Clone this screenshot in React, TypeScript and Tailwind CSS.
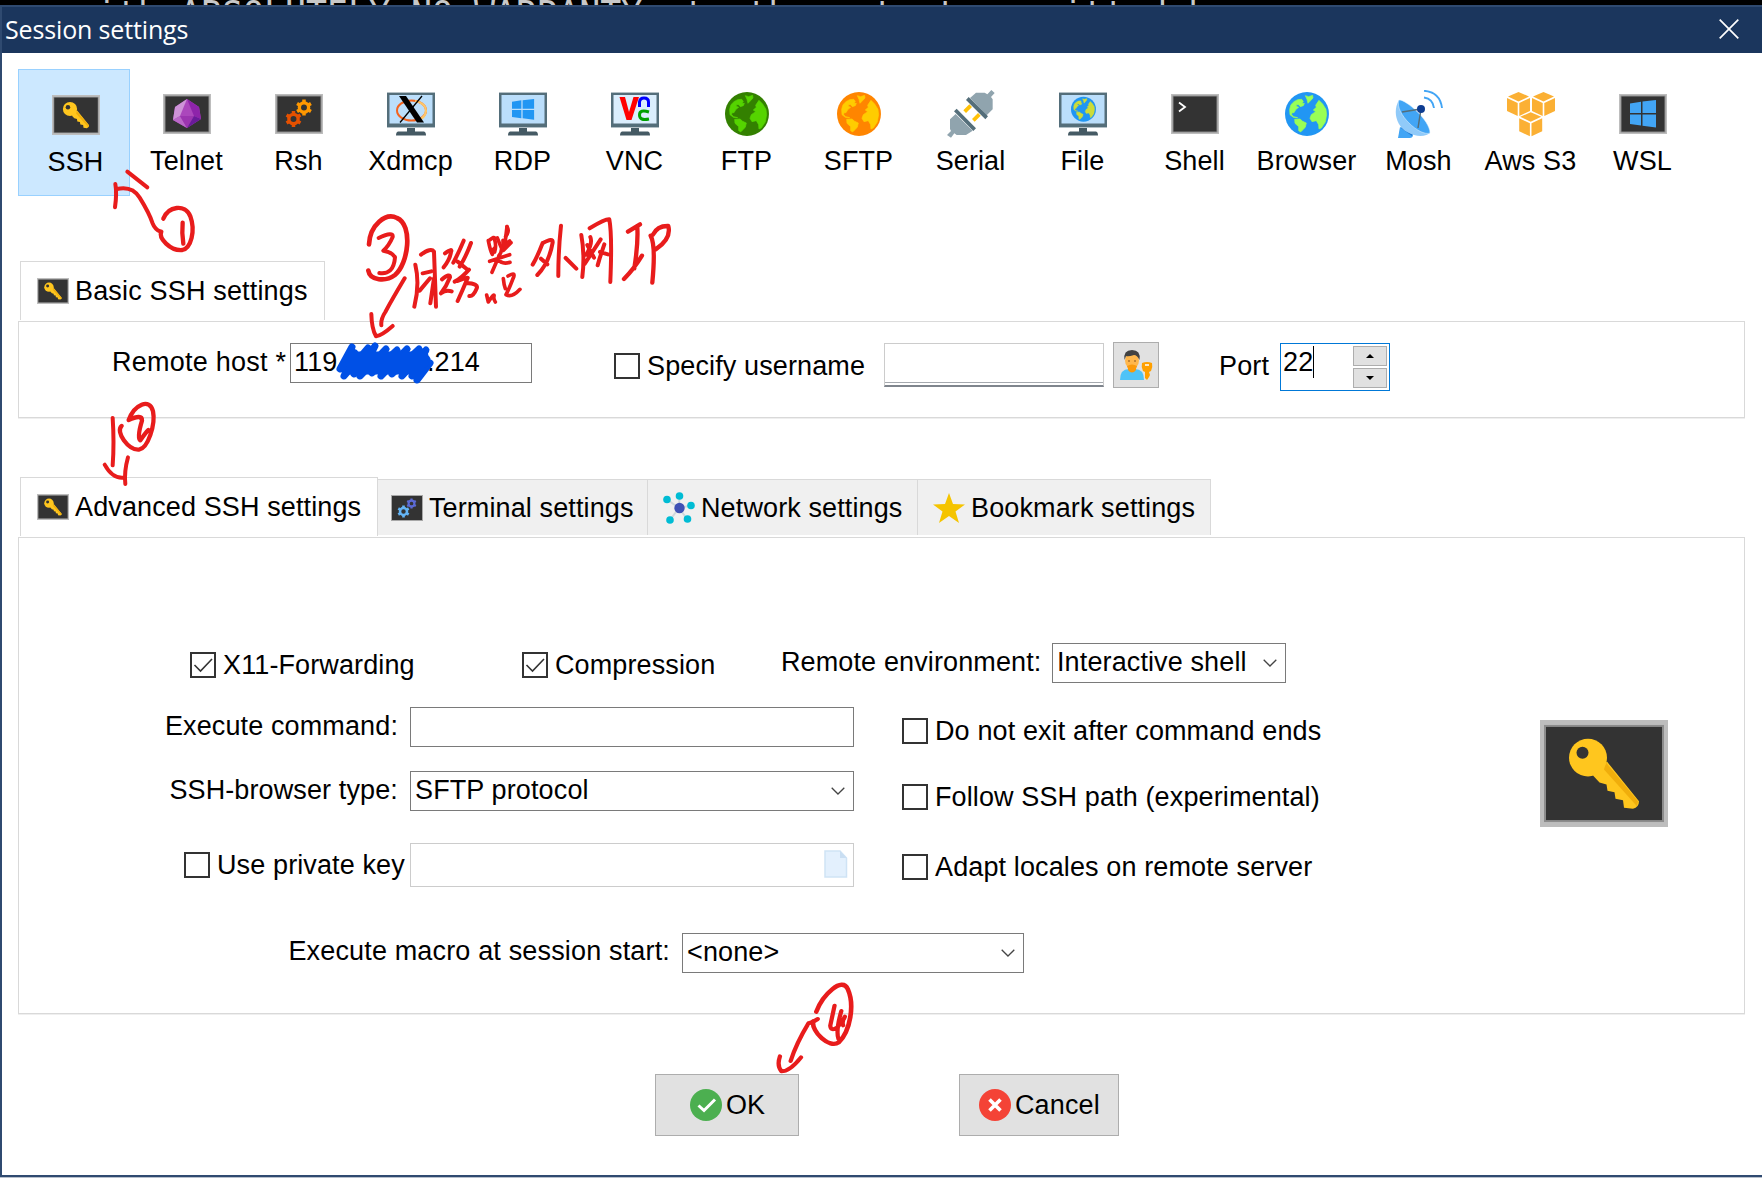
import type { ReactNode } from "react";

function TerminalFrame({ children }: { children?: ReactNode }) {
  return (
    <svg className="h-12 w-12" viewBox="0 0 48 48">
      <rect x="0" y="4" width="48" height="40" fill="#bdbdbd" />
      <rect x="1.5" y="5.5" width="45" height="37" fill="#8c8c8c" />
      <rect x="2.5" y="6.5" width="43" height="35" fill="#333333" />
      {children}
    </svg>
  );
}

function KeyIcon({ className }: { className: string }) {
  return (
    <svg className={className} viewBox="0 0 128 108" preserveAspectRatio="none">
      <rect width="128" height="108" fill="#bdbdbd" />
      <rect x="4" y="5" width="120" height="98" fill="#8c8c8c" />
      <rect x="6" y="7" width="116" height="94" fill="#333333" />
      <path d="M67 42 L99 82 Q99 88 93 89.500 L84 88.500 L83 81 L75.500 79.500 L74.500 73 L67.500 71.500 L66.500 65 L59.500 63 L53 56Z" fill="#ffc61e" />
      <path d="M66 43 L98 82 L97 87 L64 50Z" fill="#f0ae0c" />
      <circle cx="48" cy="38" r="19" fill="#ffc61e" />
      <circle cx="42.500" cy="33" r="6" fill="#333333" />
    </svg>
  );
}

function Gear({ cx, cy, r, color }: { cx: number; cy: number; r: number; color: string }) {
  return (
    <g stroke={color} fill="none">
      <circle cx={cx} cy={cy} r={r * 0.58} strokeWidth={r * 0.42} />
      {[0, 60, 120, 180, 240, 300].map((a) => (
        <path key={a} d={`M${cx} ${cy - r * 0.65} V${cy - r}`} strokeWidth={r * 0.44} transform={`rotate(${a} ${cx} ${cy})`} />
      ))}
    </g>
  );
}

function Monitor({ screen = "#bbdefb", children }: { screen?: string; children?: ReactNode }) {
  return (
    <svg className="h-12 w-12" viewBox="0 0 48 48">
      <rect x="0" y="2" width="48" height="36" fill="#b4c0c6" />
      <rect x="0" y="3" width="48" height="34" fill="#546e7a" />
      <rect x="2.500" y="5" width="43" height="28.500" fill={screen} />
      <rect x="20" y="38" width="8" height="4" fill="#455a64" />
      <path d="M11 41.500 H37 Q39 42 39 45.500 H9 Q9 42 11 41.500Z" fill="#455a64" />
      {children}
    </svg>
  );
}

function GlobeShape({ sea, land }: { sea: string; land: string }) {
  return (
    <g>
      <circle cx="171" cy="102" r="66" fill={sea} />
      <g fill={land} stroke={land} strokeWidth="2" strokeLinejoin="round">
        <path d="M119 88 L123 74 L132 65 L143 59 L155 58 L160 64 L156 70 L163 70 L160 77 L151 80 L146 74 L139 74 L139 79 L146 82 L138 88 L132 98 L126 98 L125 104 L131 110 L143 113 L130 112 L120 104Z" />
        <path d="M134 118 L150 117 L158 124 L169 129 L166 142 L157 151 L152 156 L146 152 L146 140 L135 130Z" />
        <path d="M166 47 L176 50 L188 46 L189 54 L180 64 L174 70 L171 58Z" />
        <path d="M207 61 L218 72 L228 88 L230 104 L226 126 L214 144 L207 147 L206 134 L199 122 L186 125 L180 115 L184 104 L197 95 L190 90 L199 82 L197 76Z" />
      </g>
    </g>
  );
}

function Globe({ sea, land }: { sea: string; land: string }) {
  return (
    <svg className="h-12 w-12" viewBox="0 0 48 48">
      <g transform="translate(2 2) scale(.333) translate(-105 -36)">
        <GlobeShape sea={sea} land={land} />
      </g>
    </svg>
  );
}

function WindowsMark({ color, transform }: { color: string; transform?: string }) {
  return (
    <g fill={color} transform={transform}>
      <path d="M0 3.500 L11 1.800 V13 H0Z" />
      <path d="M12.500 1.600 L26 0 V13 H12.500Z" />
      <path d="M0 14.500 H11 V25.500 L0 24Z" />
      <path d="M12.500 14.500 H26 V27.500 L12.500 25.800Z" />
    </g>
  );
}

function Cube({ x, y }: { x: number; y: number }) {
  return (
    <g transform={`translate(${x} ${y})`} fill="#fbb034">
      <path d="M11.500 0 L22 4.500 L11.500 9.500 L1 4.500Z" />
      <path d="M0 6 L10.700 11 V24 L0 19Z" />
      <path d="M23 6 L12.300 11 V24 L23 19Z" />
    </g>
  );
}

function SerialIcon() {
  return (
    <svg className="h-12 w-12" viewBox="0 0 144 144">
      <g transform="translate(-771 -30)">
        <path d="M771 165 L783 153 L780 147 V118 L797 102 L848 152 L828 165 H800 L793 160 L783 173Z" fill="#90a4ae" />
        <path d="M914 39 L903 51 L908 58 V88 L890 106 L840 54 L858 38 H884 L892 43 L904 30Z" fill="#90a4ae" />
        <path d="M792 94 L800 86 L858 145 L850 153Z M828 60 L836 51 L894 109 L886 118Z" fill="#546e7a" />
        <path d="M820 91 L838 73 L846 81 L828 99Z M846 117 L864 99 L872 107 L854 125Z" fill="#ffc107" />
      </g>
    </svg>
  );
}

function MoshIcon() {
  return (
    <svg className="h-12 w-12" viewBox="0 0 48 48">
      <path d="M5 37 L17 42 L18 46 Q17 48 15 48 H3Z" fill="#42a5f5" />
      <path d="M6 38 L17 46 L18 43 L8 36Z" fill="#1976d2" />
      <path d="M4 10 C-3 22 2 36 12 42 C22 48 32 46 35 43Z" fill="#90caf9" />
      <path d="M4 10 C10 9 35 30 35 43 C25 47 -1 23 4 10Z" fill="#42a5f5" stroke="#e3f2fd" strokeWidth=".5" />
      <path d="M7 22 L26 19 L23 38" fill="none" stroke="#546e7a" strokeWidth="1.500" />
      <circle cx="26" cy="19" r="4" fill="#0d3c91" />
      <path d="M29 7.500 Q38 9 39 18 M29 .800 Q45 2 47 18" fill="none" stroke="#42a5f5" strokeWidth="1.900" />
    </svg>
  );
}

type Session = { name: string; icon: ReactNode };

const sessions: Session[] = [
  {
    name: "Telnet",
    icon: (
      <TerminalFrame>
        <path d="M24 9 L36 17 L38 29 L24 38 L10 30 L12 17Z" fill="#ab47bc" />
        <path d="M24 9 L17 26 L10 30 L12 17Z" fill="#ce93d8" />
        <path d="M24 9 L31 26 L38 29 L36 17Z" fill="#8e24aa" />
        <path d="M17 26 L24 38 L10 30Z" fill="#ba68c8" />
        <path d="M17 26 H31 L24 38Z" fill="#9c35b0" />
        <path d="M31 26 L38 29 L24 38Z" fill="#6a1b9a" />
      </TerminalFrame>
    ),
  },
  {
    name: "Rsh",
    icon: (
      <TerminalFrame>
        <Gear cx={29} cy={17.5} r={8} color="#ff9800" />
        <Gear cx={18.500} cy={29} r={8} color="#e65100" />
      </TerminalFrame>
    ),
  },
  {
    name: "Xdmcp",
    icon: (
      <Monitor>
        <ellipse cx="24.500" cy="20.500" rx="14.500" ry="10" fill="none" stroke="#f4631e" strokeWidth="2" />
        <path d="M28 11 Q39 13 39 21 Q38 28 31 30" fill="none" stroke="#fdc66b" strokeWidth="2.200" />
        <path d="M12 6 H19 L37 32.500 H30Z" fill="#000" />
        <path d="M35 6 L13 32.500" stroke="#000" strokeWidth="1.300" />
      </Monitor>
    ),
  },
  {
    name: "RDP",
    icon: (
      <Monitor>
        <WindowsMark color="#2196f3" transform="translate(13 9) scale(.85 .75)" />
      </Monitor>
    ),
  },
  {
    name: "VNC",
    icon: (
      <Monitor screen="#dbeefd">
        <path d="M8.500 7 H14 L18 22 L22.500 7 H28 L20.500 30 H15.500Z" fill="#f00" />
        <path d="M28.500 17 V12 Q29 8 33 8 Q37.500 8 37.500 12 V17" fill="none" stroke="#00f" strokeWidth="3" />
        <path d="M38 22 Q28.500 19 28.500 25 Q28.500 31 38 29" fill="none" stroke="#00a000" strokeWidth="3" />
      </Monitor>
    ),
  },
  { name: "FTP", icon: <Globe sea="#338000" land="#55d400" /> },
  { name: "SFTP", icon: <Globe sea="#ff8500" land="#ffcc00" /> },
  { name: "Serial", icon: <SerialIcon /> },
  {
    name: "File",
    icon: (
      <Monitor>
        <g transform="translate(12 6.700) scale(.189) translate(-105 -36)">
          <GlobeShape sea="#2196f3" land="#cddc39" />
        </g>
      </Monitor>
    ),
  },
  {
    name: "Shell",
    icon: (
      <TerminalFrame>
        <path d="M8 12.500 L14 17 L8 21.500" fill="none" stroke="#fff" strokeWidth="1.800" />
      </TerminalFrame>
    ),
  },
  { name: "Browser", icon: <Globe sea="#2196f3" land="#99ff55" /> },
  { name: "Mosh", icon: <MoshIcon /> },
  {
    name: "Aws S3",
    icon: (
      <svg className="h-12 w-12" viewBox="0 0 48 48">
        <Cube x={0} y={2} />
        <Cube x={25} y={2} />
        <Cube x={12.200} y={22.300} />
      </svg>
    ),
  },
  {
    name: "WSL",
    icon: (
      <TerminalFrame>
        <WindowsMark color="#42a5f5" transform="translate(11 10)" />
      </TerminalFrame>
    ),
  },
];

function Checkbox({ label, checked = false }: { label: string; checked?: boolean }) {
  return (
    <div className="flex h-[30px] items-center gap-[7px]">
      <span className="flex h-[26px] w-[26px] shrink-0 border-2 border-[#333] bg-white">
        {checked && (
          <svg viewBox="0 0 22 22" className="h-[22px] w-[22px]">
            <path d="M2.500 11 L8.500 17 L20 5" fill="none" stroke="#333" strokeWidth="1.600" />
          </svg>
        )}
      </span>
      <span>{label}</span>
    </div>
  );
}

function Chevron() {
  return (
    <svg viewBox="0 0 14 8" className="h-2 w-3.5 shrink-0">
      <path d="M.7 .7 L7 7 L13.300 .7" fill="none" stroke="#444" strokeWidth="1.300" />
    </svg>
  );
}

function Select({ value, width }: { value: string; width: string }) {
  return (
    <div className={`flex h-10 items-start justify-between border border-[#7a7a7a] bg-white pl-1 pr-2 pt-[3px] ${width}`}>
      <span>{value}</span>
      <span className="flex h-8 items-center">
        <Chevron />
      </span>
    </div>
  );
}

function PlainTab({ label, icon, width, textClass }: { label: string; icon: ReactNode; width: string; textClass: string }) {
  return (
    <div className={`mt-0.5 flex h-14 items-center border-r border-t border-[#d9d9d9] bg-[#f0f0f0] ${width}`}>
      {icon}
      <span className={textClass}>{label}</span>
    </div>
  );
}

function SpinButton({ up }: { up: boolean }) {
  return (
    <div className="flex h-5 w-[34px] items-center justify-center border border-[#adadad] bg-[#e1e1e1]">
      <svg viewBox="0 0 8 4" className="h-1 w-2">
        <path d={up ? "M0 4 L4 0 L8 4Z" : "M0 0 H8 L4 4Z"} fill="#000" />
      </svg>
    </div>
  );
}

/* Freehand pen marks laid over the dialog. */
function Ink() {
  return (
    <svg className="pointer-events-none absolute left-0 top-0 h-[1178px] w-[1762px]" viewBox="0 0 1762 1178" fill="none" strokeLinecap="round" strokeLinejoin="round">
      <g stroke="#e81c1c" strokeWidth="12">
        <g transform="translate(95 165) scale(.3333)">
          <path d="M60 127 Q66 85 61 57 M66 72 Q112 62 134 98 Q163 145 172 173 Q180 193 195 199 M97 20 L157 67" />
          <path d="M205 161 C220 124 270 115 286 154 C302 198 288 249 262 255 C225 258 190 219 199 200 M263 173 Q260 205 265 236" strokeWidth="13" />
          <path d="M53 759 Q58 835 53 901 M29 899 Q52 941 85 938 M99 877 Q87 920 91 957" />
          <path d="M101 765 C118 719 164 697 174 739 C182 778 159 850 132 854 C100 857 60 800 80 783 M101 765 Q142 746 141 767 Q125 820 136 826 Q151 804 160 795" strokeWidth="13" />
        </g>
        <g transform="translate(360 210) scale(.3333)">
          <path d="M27 103 C30 45 77 7 111 24 C160 45 145 162 105 195 C77 216 30 212 25 182" strokeWidth="14" />
          <path d="M56 84 Q101 63 98 81 Q87 107 70 122 Q96 126 105 142 Q101 195 58 189 M134 205 Q97 267 76 306 Q62 327 64 346 M34 312 Q35 356 48 379 Q65 377 98 348" />
          <path d="M166 164 Q180 222 163 290 M183 134 Q213 112 222 125 Q225 210 228 290 M188 190 L214 184 M179 242 L210 205 M211 280 L222 205" />
          <path d="M255 130 Q279 113 273 126 Q270 148 251 172 M311 92 Q294 132 280 158 M333 99 Q318 140 299 170 M293 155 L321 178 M246 208 Q271 188 270 202 Q259 230 243 250 Q257 238 275 244 M327 179 Q303 206 284 215 M293 213 Q326 200 323 204 Q308 240 293 273 M317 219 Q359 220 349 238 Q340 260 328 258" />
          <path d="M385 92 Q391 123 397 133 M389 90 Q405 78 403 85 Q410 107 404 126 M394 125 L406 112 M441 50 Q450 64 437 79 M429 91 L430 121 M430 105 L449 93 M430 121 L453 98 M389 154 L449 134 M418 136 L396 187 M412 147 Q426 165 450 157 M380 255 L385 276 Q405 246 402 259 Q400 268 406 276 M430 206 Q432 226 436 236 M444 198 Q470 183 459 206 Q447 238 438 254 Q455 265 480 238" strokeWidth="11" />
          <path d="M412 84 L425 116 Q424 128 418 136 M441 50 L436 92" strokeWidth="11" />
          <path d="M548 99 Q530 145 518 164 M549 99 Q580 81 578 98 Q567 160 532 195 M543 146 L562 163 M603 47 Q595 120 595 198 M617 144 L649 176" />
          <path d="M664 75 Q675 135 667 201 M689 55 Q735 27 748 28 Q757 75 751 216 M691 81 Q699 99 679 134 M682 105 L702 143 M722 88 L674 162 M733 103 L719 145 L713 166 M720 126 L744 133" />
          <path d="M804 65 L840 43 M832 52 Q835 100 823 175 M846 137 Q821 178 792 207 M872 77 Q888 106 877 218 M879 74 Q892 47 925 48 Q935 86 887 118" strokeWidth="13" />
        </g>
        <g transform="translate(600 960) scale(.357 .3333)">
          <path d="M606 155 C624 103 679 49 694 87 C714 135 701 213 669 247 C642 267 592 215 597 184" strokeWidth="13" />
          <path d="M610 177 Q594 188 584 190 Q550 250 534 303 M504 289 Q495 317 508 334 Q532 334 563 292 M657 137 L645 197 Q647 215 665 202 L684 175 M676 153 Q660 212 668 237 M686 170 Q677 183 681 196" />
        </g>
      </g>
      <g stroke="#0050e6" strokeWidth="7">
        <path d="M352 347 L340 369 L355 353 L344 376 L368 348 L354 374 L375 346 L360 376 L386 349 L372 373 L397 350 L381 376 L407 349 L392 374 L419 349 L402 376 L426 350 L412 376 L427 359 L417 380 L430 363" />
        <path d="M350 363 H424 M352 356 H424 M350 370 H422" strokeWidth="9" />
      </g>
    </svg>
  );
}

export default function App() {
  return (
    <div className="relative flex h-[1178px] w-[1762px] flex-col overflow-hidden bg-white font-['Liberation_Sans',Arial,sans-serif] text-[27px] leading-[30px] tracking-[0.12px] text-black">
      <div className="h-[5px] shrink-0 overflow-hidden whitespace-pre bg-black pl-[75px] font-['DejaVu_Sans_Mono',monospace] text-[34.900px] leading-[28px] tracking-normal text-[#c8c8c8]">
        with ABSOLUTELY NO WARRANTY, to the extent permitted by
      </div>

      <div className="flex h-[1172px] shrink-0 flex-col border-b-2 border-l-2 border-t-2 border-[#2f4a70] bg-white">
        <header className="flex h-[46px] shrink-0 items-center justify-between bg-[#1b365d] pl-[3px] pr-[23px] text-white">
          <h1 className="pb-[3px] font-['Open_Sans','Noto_Sans',sans-serif] text-[25px] tracking-[-0.15px]">Session settings</h1>
          <svg viewBox="0 0 20 20" className="mb-0.5 h-5 w-5">
            <path d="M.7 .7 L19.300 19.300 M19.300 .7 L.7 19.300" stroke="#fff" strokeWidth="1.700" />
          </svg>
        </header>

        <nav className="ml-4 mt-4 flex h-[127px] shrink-0">
          <div className="flex w-28 flex-col items-center gap-2 border border-[#99d1ff] bg-[#cce8ff] pl-[3px] pt-[21px]">
            <div className="flex h-12 w-12 items-center">
              <KeyIcon className="h-10 w-12" />
            </div>
            <span>SSH</span>
          </div>
          {sessions.map((s) => (
            <div key={s.name} className="flex w-28 flex-col items-center gap-2 whitespace-nowrap pl-px pt-[21px]">
              {s.icon}
              <span>{s.name}</span>
            </div>
          ))}
        </nav>

        <div className="ml-[18px] mt-[65px] flex h-[60px] shrink-0">
          <div className="flex h-[59px] w-[305px] items-center gap-1.5 border-x border-t border-[#d9d9d9] pb-px pl-4">
            <KeyIcon className="h-[26px] w-8" />
            <span className="tracking-[0.17px]">Basic SSH settings</span>
          </div>
        </div>
        <section className="ml-4 flex h-[97px] w-[1727px] shrink-0 items-start border border-[#d9d9d9] shadow-[0_1px_0_#efefef]">
          <span className="ml-[93px] mt-[25px] w-[178px] whitespace-nowrap tracking-[0.25px]">Remote host *</span>
          <div className="mt-[21px] flex h-10 w-[242px] items-start justify-between border border-[#7a7a7a] pl-[3px] pr-[51px] pt-[3px]">
            <span>119.</span>
            <span>.214</span>
          </div>
          <div className="ml-[82px] mt-[29px] w-[270px] whitespace-nowrap">
            <Checkbox label="Specify username" />
          </div>
          <div className="mt-[21px] flex h-11 w-[220px] items-end border border-b-2 border-[#ccc] border-b-[#7f858d] pb-0.5">
            <div className="h-px w-full bg-[#a5a9ae]" />
          </div>
          <div className="ml-[9px] mt-5 flex h-[46px] w-[46px] items-center justify-center border border-[#adadad] bg-[#e1e1e1]">
            <svg viewBox="0 0 34 32" className="h-8 w-[34px]">
              <path d="M1 31 Q1 20 10 20 H16 Q25 20 25 31Z" fill="#4fc3f7" />
              <path d="M9 17 H17 V21 Q13 26 9 21Z" fill="#ff9800" />
              <ellipse cx="13" cy="11.500" rx="7" ry="8" fill="#ffb74d" />
              <path d="M8 17 Q13 14 18 17 Q17 22 13 22 Q9 22 8 17Z" fill="#fb9a0c" />
              <path d="M5.500 11 Q4 1 13 1 Q22 1 20.500 11 Q18 6 15 6 Q9 8 7 7Z" fill="#424242" />
              <circle cx="10" cy="12" r=".8" fill="#784719" />
              <circle cx="16" cy="12" r=".8" fill="#784719" />
              <path d="M23 14 Q28 12 33 14 Q34 18 32 22 L30 23 L31 26 L30 28 L28 31 L26 29 V23 L24 22 Q22 18 23 14Z" fill="#ffa000" />
              <path d="M26 16 H30" stroke="#fff" strokeWidth="1.500" />
            </svg>
          </div>
          <span className="ml-[60px] mt-[29px] w-[61px]">Port</span>
          <div className="mt-[21px] flex h-12 w-[110px] items-start border border-[#0078d7] pl-0.5">
            <span className="mt-[3px] w-[30px]">22</span>
            <span className="mt-[2px] h-8 w-px bg-black" />
            <div className="ml-auto mr-0.5 mt-0.5 flex flex-col gap-0.5">
              <SpinButton up />
              <SpinButton up={false} />
            </div>
          </div>
        </section>

        <div className="ml-[18px] mt-[59px] flex h-[60px] shrink-0 items-start whitespace-nowrap">
          <div className="flex h-[59px] w-[358px] items-center gap-1.5 border-x border-t border-[#d9d9d9] pb-px pl-4">
            <KeyIcon className="h-[26px] w-8" />
            <span>Advanced SSH settings</span>
          </div>
          <PlainTab
            label="Terminal settings"
            width="w-[270px] pl-[13px]"
            textClass="pl-1.5"
            icon={
              <svg viewBox="0 0 32 26" className="h-[26px] w-8 shrink-0">
                <rect width="32" height="26" fill="#a8a8a8" />
                <rect x="1" y="1" width="30" height="24" fill="#333" />
                <Gear cx={20.500} cy={8.500} r={5} color="#5c6bd6" />
                <Gear cx={12.500} cy={16.500} r={6} color="#64b5f6" />
              </svg>
            }
          />
          <PlainTab
            label="Network settings"
            width="w-[270px] pl-[15px]"
            textClass="pl-[6px]"
            icon={
              <svg viewBox="0 0 32 32" className="h-8 w-8 shrink-0">
                <path d="M16 16 L4 7.500 M16 16 L16.500 4 M16 16 L28 13.500 M16 16 L24 27 M16 16 L7 28" stroke="#cfd8dc" strokeWidth="2" />
                <circle cx="16.500" cy="16" r="5.200" fill="#3f51b5" />
                <g fill="#00bcd4">
                  <circle cx="4" cy="7.500" r="3.800" />
                  <circle cx="16.500" cy="4" r="3.800" />
                  <circle cx="28" cy="13.500" r="3.800" />
                  <circle cx="24.500" cy="27" r="3.800" />
                  <circle cx="7" cy="28" r="3.800" />
                </g>
              </svg>
            }
          />
          <PlainTab
            label="Bookmark settings"
            width="w-[293px] pl-[15px]"
            textClass="pl-[6px]"
            icon={
              <svg viewBox="0 0 32 32" className="h-8 w-8 shrink-0">
                <path d="M16 1 L20 12 L32 12.500 L22.500 19.500 L26 31 L16 24 L6 31 L9.500 19.500 L0 12.500 L12 12Z" fill="#f5c400" />
              </svg>
            }
          />
        </div>

        <section className="ml-4 flex h-[477px] w-[1727px] shrink-0 flex-col whitespace-nowrap border border-[#d9d9d9] pt-[105px] shadow-[0_1px_0_#efefef]">
          <div className="flex h-16 shrink-0 items-start pl-[171px]">
            <div className="mt-[7px] w-[332px]">
              <Checkbox label="X11-Forwarding" checked />
            </div>
            <div className="mt-[7px] w-[259px]">
              <Checkbox label="Compression" checked />
            </div>
            <span className="mt-1 w-[271px]">Remote environment:</span>
            <Select value="Interactive shell" width="w-[234px]" />
          </div>
          <div className="flex h-[226px] shrink-0 items-start">
            <div className="flex w-[836px] flex-col">
              <div className="flex h-16 items-start">
                <span className="mr-[12px] mt-1 w-[379px] text-right">Execute command:</span>
                <div className="h-10 w-[444px] border border-[#7a7a7a]" />
              </div>
              <div className="flex h-[72px] items-start">
                <span className="mr-[12px] mt-1 w-[379px] text-right">SSH-browser type:</span>
                <Select value="SFTP protocol" width="w-[444px]" />
              </div>
              <div className="flex items-start">
                <div className="ml-[165px] mt-[7px] w-[226px]">
                  <Checkbox label="Use private key" />
                </div>
                <div className="flex h-11 w-[444px] items-center justify-end border border-[#ccc] pb-0.5 pr-[5px]">
                  <svg viewBox="0 0 24 28" className="h-7 w-6">
                    <path d="M1 1 H16 L22.500 8 V27 H1Z" fill="#e3f0fd" stroke="#cfe3f5" strokeWidth="1.500" />
                    <path d="M16 1 V8 H22.500Z" fill="#c9def2" />
                  </svg>
                </div>
              </div>
            </div>
            <div className="ml-[47px] mt-[9px] flex w-[638px] flex-col">
              <Checkbox label="Do not exit after command ends" />
              <div className="mt-9">
                <Checkbox label="Follow SSH path (experimental)" />
              </div>
              <div className="mt-10">
                <Checkbox label="Adapt locales on remote server" />
              </div>
            </div>
            <KeyIcon className="mt-[13px] h-[107px] w-32" />
          </div>
          <div className="flex items-start">
            <span className="mr-[12px] mt-[3px] w-[651px] text-right tracking-[0.16px]">Execute macro at session start:</span>
            <Select value="<none>" width="w-[342px]" />
          </div>
        </section>

        <footer className="ml-[653px] mt-[60px] flex h-[62px] shrink-0 gap-40">
          <button className="flex w-36 items-center gap-1 border border-[#adadad] bg-[#e1e1e1] pl-[34px]">
            <svg viewBox="0 0 32 32" className="h-8 w-8">
              <circle cx="16" cy="16" r="16" fill="#4caf50" />
              <path d="M8.500 16.500 L14 21.500 L25 10.500" fill="none" stroke="#fff" strokeWidth="3" />
            </svg>
            <span>OK</span>
          </button>
          <button className="flex w-40 items-center gap-1 border border-[#adadad] bg-[#e1e1e1] pl-[19px]">
            <svg viewBox="0 0 32 32" className="h-8 w-8">
              <circle cx="16" cy="16" r="16" fill="#f44336" />
              <path d="M10.500 10.500 L21.500 21.500 M21.500 10.500 L10.500 21.500" stroke="#fff" strokeWidth="3.600" />
            </svg>
            <span>Cancel</span>
          </button>
        </footer>
      </div>
      <div className="h-px shrink-0 bg-[#b8c0cc]" />
      <Ink />
    </div>
  );
}
